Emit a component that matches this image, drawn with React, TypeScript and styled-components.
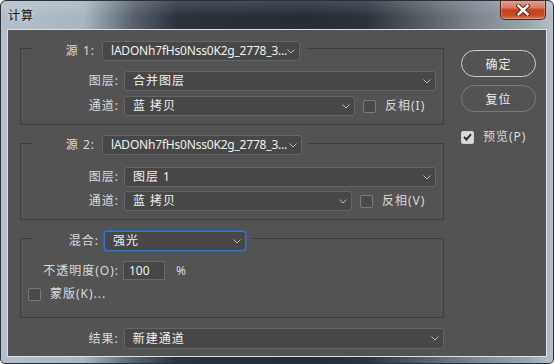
import React from 'react';
import styled, { createGlobalStyle } from 'styled-components';

const Global = createGlobalStyle`
  html, body { margin: 0; padding: 0; background: #ffffff; }
  body { font-family: "Noto Sans", "Noto Sans CJK SC", sans-serif; font-size: 12px; }
  * { box-sizing: border-box; }
`;

const Window = styled.div`
  width: 554px;
  height: 364px;
  border: 1px solid #2a3139;
  border-radius: 6px 6px 5px 5px;
  background:
    linear-gradient(180deg, rgba(255,255,255,0.14) 0px, rgba(255,255,255,0) 16px),
    linear-gradient(90deg, #b3bfca 0%, #a9b6c2 15%, #56616c 24%, #2a323c 32%, #242c36 55%, #2b333d 66%, #5b646d 78%, #7c868f 86%, #9aa4ad 95%, #b4bec7 100%);
  display: flex;
  flex-direction: column;
  overflow: hidden;
`;

const TitleBar = styled.div`
  height: 28px;
  display: flex;
  justify-content: space-between;
  align-items: flex-start;
  padding-left: 7px;
  padding-right: 7px;
`;

const Title = styled.div`
  font-family: "Noto Sans CJK SC", sans-serif;
  font-size: 12px;
  letter-spacing: 1px;
  color: #111;
  padding-top: 6px;
  line-height: 16px;
  text-shadow: 0 0 6px rgba(255,255,255,0.7);
`;

const CloseButton = styled.div`
  width: 46px;
  height: 20px;
  margin-top: -1px;
  border: 1px solid #4f2520;
  border-top: none;
  border-radius: 0 0 5px 5px;
  background: linear-gradient(180deg, #e6a495 0%, #d77a67 40%, #c4411f 52%, #c94a25 80%, #dd7a4d 100%);
  box-shadow: inset 0 0 0 1px rgba(255,210,190,0.35);
  display: flex;
  align-items: center;
  justify-content: center;
`;

const Client = styled.div`
  flex: 1;
  margin: 0 6px 6px 6px;
  border: 1px solid #dce3ea;
  background: #535353;
  display: flex;
  padding-left: 12px;
  color: #dadada;
`;

const LeftCol = styled.div`
  width: 424px;
  display: flex;
  flex-direction: column;
  padding-top: 18px;
`;

const RightCol = styled.div`
  display: flex;
  flex-direction: column;
  margin-left: 17px;
  padding-top: 20px;
`;

const Group = styled.div<{ $mt: number; $pb: number }>`
  margin-top: ${p => p.$mt}px;
  border: 1px solid #3e3e3e;
  padding-bottom: ${p => p.$pb}px;
  display: flex;
  flex-direction: column;
`;

const GroupHead = styled.div<{ $mt: number; $mb: number }>`
  display: flex;
  align-items: center;
  align-self: flex-start;
  margin: ${p => p.$mt}px 0 ${p => p.$mb}px 12px;
  padding-right: 6px;
  background: #535353;
`;

const HeadLabel = styled.div<{ $w: number; $gap: number }>`
  width: ${p => p.$w}px;
  margin-right: ${p => p.$gap}px;
  text-align: right;
  letter-spacing: 1px;
  line-height: 16px;
  white-space: nowrap;
`;

const Row = styled.div<{ $mt?: number }>`
  display: flex;
  align-items: center;
  margin-top: ${p => p.$mt ?? 0}px;
`;

const RowLabel = styled.div<{ $w: number; $gap: number }>`
  width: ${p => p.$w}px;
  margin-right: ${p => p.$gap}px;
  text-align: right;
  letter-spacing: 1px;
  line-height: 16px;
  white-space: nowrap;
`;

const Select = styled.div<{ $w: number; $h?: number; $focus?: boolean }>`
  width: ${p => p.$w}px;
  height: ${p => p.$h ?? 20}px;
  border: 1px solid ${p => (p.$focus ? '#2a79d8' : '#656565')};
  box-shadow: ${p => (p.$focus ? '0 0 0 0.5px #2a79d8' : 'none')};
  border-radius: 3px;
  background: #474747;
  display: flex;
  align-items: center;
  padding: 0 4px 0 8px;
  color: #f0f0f0;
`;

const SelectText = styled.span<{ $spaced?: boolean }>`
  flex: 1;
  white-space: nowrap;
  letter-spacing: ${p => (p.$spaced ? '1px' : '-0.2px')};
  line-height: 16px;
`;

const CheckBox = styled.div<{ $checked?: boolean; $ml?: number }>`
  width: 13px;
  height: 13px;
  margin-left: ${p => p.$ml ?? 0}px;
  border: 1px solid ${p => (p.$checked ? '#cfcfcf' : '#7a7a7a')};
  border-radius: 2px;
  background: ${p => (p.$checked ? '#d9d9d9' : '#4a4a4a')};
  display: flex;
  align-items: center;
  justify-content: center;
  flex-shrink: 0;
`;

const CheckLabel = styled.div<{ $ml: number }>`
  margin-left: ${p => p.$ml}px;
  letter-spacing: 1px;
  line-height: 16px;
  white-space: nowrap;
  color: #dadada;
`;

const TextInput = styled.div`
  width: 42px;
  height: 19px;
  border: 1px solid #6a6a6a;
  background: #474747;
  padding-left: 5px;
  display: flex;
  align-items: center;
  color: #f0f0f0;
  line-height: 16px;
`;

const Unit = styled.div`
  margin-left: 11px;
  line-height: 16px;
`;

const PillButton = styled.div<{ $primary?: boolean; $mt?: number }>`
  width: 75px;
  height: 27px;
  margin-top: ${p => p.$mt ?? 0}px;
  border: 1px solid ${p => (p.$primary ? '#cfcfcf' : '#7b7b7b')};
  border-radius: 14px;
  display: flex;
  align-items: center;
  justify-content: center;
  color: #ececec;
  letter-spacing: 1px;
  font-family: "Noto Sans CJK SC", sans-serif;
`;

const PreviewRow = styled.div`
  display: flex;
  align-items: center;
  margin-top: 17px;
`;

const Chevron = () => (
  <svg width="8" height="5" viewBox="0 0 8 5" style={{ flexShrink: 0 }}>
    <polyline points="0.5,0.5 4,4 7.5,0.5" fill="none" stroke="#bdbdbd" strokeWidth="1" />
  </svg>
);

const Check = () => (
  <svg width="9" height="8" viewBox="0 0 9 8">
    <polyline points="1,4 3.5,6.5 8,1.2" fill="none" stroke="#2e2e2e" strokeWidth="2" />
  </svg>
);

const CloseX = () => (
  <svg width="14" height="12" viewBox="0 0 14 12">
    <path d="M2.5 1.8 L11.5 10.2 M11.5 1.8 L2.5 10.2" stroke="#5a2a22" strokeWidth="4.4" strokeLinecap="square" />
    <path d="M2.5 1.8 L11.5 10.2 M11.5 1.8 L2.5 10.2" stroke="#ffffff" strokeWidth="2.4" strokeLinecap="square" />
  </svg>
);

export default function App() {
  return (
    <>
      <Global />
      <Window>
        <TitleBar>
          <Title>计算</Title>
          <CloseButton>
            <CloseX />
          </CloseButton>
        </TitleBar>
        <Client>
          <LeftCol>
            <Group $mt={0} $pb={8}>
              <GroupHead $mt={-8} $mb={10}>
                <HeadLabel $w={62} $gap={7}>源 1:</HeadLabel>
                <Select $w={198}>
                  <SelectText>lADONh7fHs0Nss0K2g_2778_3...</SelectText>
                  <Chevron />
                </Select>
              </GroupHead>
              <Row>
                <RowLabel $w={98} $gap={5}>图层:</RowLabel>
                <Select $w={312}>
                  <SelectText $spaced>合并图层</SelectText>
                  <Chevron />
                </Select>
              </Row>
              <Row $mt={5}>
                <RowLabel $w={98} $gap={5}>通道:</RowLabel>
                <Select $w={231}>
                  <SelectText $spaced>蓝 拷贝</SelectText>
                  <Chevron />
                </Select>
                <CheckBox $ml={8} />
                <CheckLabel $ml={9}>反相(I)</CheckLabel>
              </Row>
            </Group>

            <Group $mt={18} $pb={8}>
              <GroupHead $mt={-9} $mb={12}>
                <HeadLabel $w={62} $gap={7}>源 2:</HeadLabel>
                <Select $w={200}>
                  <SelectText>lADONh7fHs0Nss0K2g_2778_3...</SelectText>
                  <Chevron />
                </Select>
              </GroupHead>
              <Row>
                <RowLabel $w={98} $gap={5}>图层:</RowLabel>
                <Select $w={312}>
                  <SelectText $spaced>图层 1</SelectText>
                  <Chevron />
                </Select>
              </Row>
              <Row $mt={4}>
                <RowLabel $w={98} $gap={5}>通道:</RowLabel>
                <Select $w={228}>
                  <SelectText $spaced>蓝 拷贝</SelectText>
                  <Chevron />
                </Select>
                <CheckBox $ml={8} />
                <CheckLabel $ml={9}>反相(V)</CheckLabel>
              </Row>
            </Group>

            <Group $mt={18} $pb={15}>
              <GroupHead $mt={-8} $mb={10}>
                <HeadLabel $w={66} $gap={5}>混合:</HeadLabel>
                <Select $w={142} $focus>
                  <SelectText $spaced>强光</SelectText>
                  <Chevron />
                </Select>
              </GroupHead>
              <Row>
                <RowLabel $w={98} $gap={4}>不透明度(O):</RowLabel>
                <TextInput>100</TextInput>
                <Unit>%</Unit>
              </Row>
              <Row $mt={6}>
                <CheckBox $ml={7} />
                <CheckLabel $ml={9}>蒙版(K)...</CheckLabel>
              </Row>
            </Group>

            <Row $mt={10}>
              <RowLabel $w={99} $gap={5}>结果:</RowLabel>
              <Select $w={321} $h={21}>
                <SelectText $spaced>新建通道</SelectText>
                <Chevron />
              </Select>
            </Row>
          </LeftCol>

          <RightCol>
            <PillButton $primary>确定</PillButton>
            <PillButton $mt={8}>复位</PillButton>
            <PreviewRow>
              <CheckBox $checked>
                <Check />
              </CheckBox>
              <CheckLabel $ml={9}>预览(P)</CheckLabel>
            </PreviewRow>
          </RightCol>
        </Client>
      </Window>
    </>
  );
}
